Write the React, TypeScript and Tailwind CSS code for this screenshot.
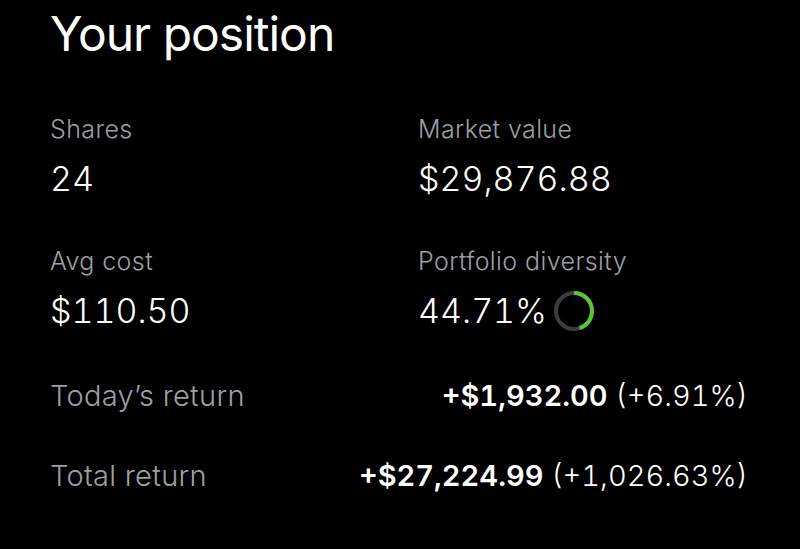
import React from "react";

const FONT = { fontFamily: "Inter, 'Noto Sans', sans-serif" };

function Ring({ pct }: { pct: number }) {
  const r = 18;
  const c = 2 * Math.PI * r;
  return (
    <svg width="42" height="42" viewBox="0 0 42 42" className="-my-[4px] shrink-0">
      <circle cx="21" cy="21" r={r} fill="none" stroke="#3b3d3f" strokeWidth="4" />
      <circle
        cx="21"
        cy="21"
        r={r}
        fill="none"
        stroke="#5ac53b"
        strokeWidth="4"
        strokeDasharray={`${(pct / 100) * c} ${c}`}
        transform="rotate(-90 21 21)"
      />
    </svg>
  );
}

function Stat({ label, children }: { label: string; children: React.ReactNode }) {
  return (
    <div className="flex flex-col">
      <div className="text-[25px] font-light leading-none tracking-[0.4px] text-[#9aa0a6]">{label}</div>
      <div className="mt-[20px] flex h-[34px] items-center gap-[6px] text-[34px] font-light leading-none text-white tabular-nums">
        {children}
      </div>
    </div>
  );
}

function ReturnRow({ label, amount, pct }: { label: string; amount: string; pct: string }) {
  return (
    <div className="flex items-center justify-between text-[29px] leading-none">
      <span className="font-light tracking-[0.3px] text-[#9aa0a6]">{label}</span>
      <span className="text-white tabular-nums">
        <span className="font-semibold">{amount}</span> <span className="font-light">{pct}</span>
      </span>
    </div>
  );
}

export default function App() {
  return (
    <div className="h-[549px] w-[800px] overflow-hidden bg-black pl-[50px] pr-[52px] pt-[10px]" style={FONT}>
      <h1 className="text-[48px] font-normal leading-none tracking-[-1px] text-white">Your position</h1>
      <div className="mt-[59px] grid grid-cols-[368px_1fr] gap-y-[53px]">
        <Stat label="Shares">24</Stat>
        <Stat label="Market value">$29,876.88</Stat>
        <Stat label="Avg cost">$110.50</Stat>
        <Stat label="Portfolio diversity">
          44.71%
          <Ring pct={44.71} />
        </Stat>
      </div>
      <div className="mt-[53px] flex flex-col gap-[51px]">
        <ReturnRow label="Today’s return" amount="+$1,932.00" pct="(+6.91%)" />
        <ReturnRow label="Total return" amount="+$27,224.99" pct="(+1,026.63%)" />
      </div>
    </div>
  );
}
